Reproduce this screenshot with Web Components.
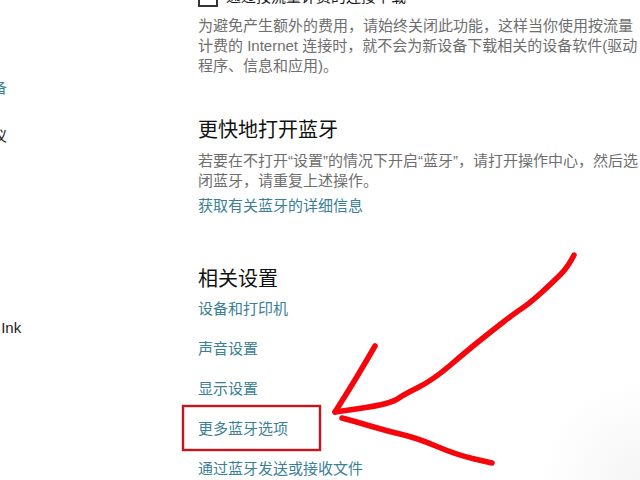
<!DOCTYPE html>
<html lang="zh-CN">
<head>
<meta charset="utf-8">
<title>蓝牙设置</title>
<style>
    html, body {
        margin: 0;
        padding: 0;
        width: 640px;
        height: 480px;
        overflow: hidden;
        background: #fff;
        font-family: "Liberation Sans", "Noto Sans CJK SC", sans-serif;
    }
</style>
</head>
<body>
<settings-page>
    <nav-list slot="nav">
        <nav-item class="link" style="margin-top:78px">蓝牙和其他设备</nav-item>
        <nav-item style="margin-top:28px">打印机和扫描仪</nav-item>
        <nav-item style="margin-top:172px">笔和 Windows Ink</nav-item>
    </nav-list>
    <settings-check slot="main">通过按流量计费的连接下载</settings-check>
    <settings-text slot="main" style="margin-top:9px">为避免产生额外的费用，请始终关闭此功能，这样当你使用按流量计费的 Internet 连接时，就不会为新设备下载相关的设备软件(驱动程序、信息和应用)。</settings-text>
    <settings-heading slot="main" style="margin-top:40px">更快地打开蓝牙</settings-heading>
    <settings-text slot="main" style="margin-top:7px">若要在不打开“设置”的情况下开启“蓝牙”，请打开操作中心，然后选<br>闭蓝牙，请重复上述操作。</settings-text>
    <settings-link slot="main" style="margin-top:5px">获取有关蓝牙的详细信息</settings-link>
    <settings-heading slot="main" style="margin-top:49px">相关设置</settings-heading>
    <settings-link slot="main" style="margin-top:6px">设备和打印机</settings-link>
    <settings-link slot="main" style="margin-top:20px">声音设置</settings-link>
    <settings-link slot="main" style="margin-top:20px">显示设置</settings-link>
    <settings-link slot="main" style="margin-top:20px">更多蓝牙选项</settings-link>
    <settings-link slot="main" style="margin-top:20px">通过蓝牙发送或接收文件</settings-link>
</settings-page>
<red-marks></red-marks>

<script>
    class SettingsPage extends HTMLElement {
        constructor() {
            super();
            this.attachShadow({ mode: "open" }).innerHTML = `
                <style>
                    :host {
                        display: flex;
                        width: 640px;
                        height: 480px;
                        overflow: hidden;
                        background: radial-gradient(circle at 640px 480px, #f5f5f5, #fff 100px);
                    }
                    .nav { flex: 0 0 198px; overflow: hidden; }
                    .main {
                        flex: 1;
                        min-width: 0;
                        margin-top: -13px;
                        display: flex;
                        flex-direction: column;
                    }
                </style>
                <div class="nav"><slot name="nav"></slot></div>
                <div class="main"><slot name="main"></slot></div>
            `;
        }
    }

    class NavList extends HTMLElement {
        constructor() {
            super();
            this.attachShadow({ mode: "open" }).innerHTML = `
                <style>
                    :host { display: flex; flex-direction: column; }
                </style>
                <slot></slot>
            `;
        }
    }

    // left menu is scrolled sideways, only the ends of the labels show
    class NavItem extends HTMLElement {
        constructor() {
            super();
            this.attachShadow({ mode: "open" }).innerHTML = `
                <style>
                    :host {
                        display: block;
                        margin-left: -98px;
                        font-size: 15px;
                        line-height: 20px;
                        white-space: nowrap;
                        color: #1a1a1a;
                    }
                    :host(.link) { color: #3a8097; }
                </style>
                <slot></slot>
            `;
        }
    }

    class SettingsCheck extends HTMLElement {
        constructor() {
            super();
            this.attachShadow({ mode: "open" }).innerHTML = `
                <style>
                    :host {
                        display: flex;
                        align-items: center;
                        gap: 8px;
                        height: 20px;
                        font-size: 15px;
                        line-height: 20px;
                        color: #1a1a1a;
                        white-space: nowrap;
                    }
                    .box {
                        box-sizing: border-box;
                        width: 20px;
                        height: 20px;
                        border: 2px solid #333;
                    }
                </style>
                <div class="box"></div>
                <span><slot></slot></span>
            `;
        }
    }

    class SettingsText extends HTMLElement {
        constructor() {
            super();
            this.attachShadow({ mode: "open" }).innerHTML = `
                <style>
                    :host {
                        display: block;
                        width: 442px;
                        font-size: 15px;
                        line-height: 20px;
                        color: #6e6e6e;
                    }
                </style>
                <slot></slot>
            `;
        }
    }

    class SettingsHeading extends HTMLElement {
        constructor() {
            super();
            this.attachShadow({ mode: "open" }).innerHTML = `
                <style>
                    :host {
                        display: block;
                        font-size: 20px;
                        line-height: 28px;
                        color: #111;
                        white-space: nowrap;
                    }
                </style>
                <slot></slot>
            `;
        }
    }

    class SettingsLink extends HTMLElement {
        constructor() {
            super();
            this.attachShadow({ mode: "open" }).innerHTML = `
                <style>
                    :host {
                        display: block;
                        font-size: 15px;
                        line-height: 20px;
                        color: #3a8097;
                        white-space: nowrap;
                    }
                </style>
                <slot></slot>
            `;
        }
    }

    // rounds the corners of a drawn stroke
    function smooth(pts) {
        let d = `M${pts[0]}`;
        for (let i = 1; i < pts.length - 1; i++) {
            const mx = (pts[i][0] + pts[i + 1][0]) / 2;
            const my = (pts[i][1] + pts[i + 1][1]) / 2;
            d += `Q${pts[i]} ${mx},${my}`;
        }
        return d + `L${pts[pts.length - 1]}`;
    }

    const strokes = [
        [[574, 255], [568, 267], [553, 282], [530, 303], [515, 313], [493, 330], [468, 350], [433, 380], [403, 395], [395, 401], [377, 406], [335, 412]],
        [[375, 346], [357, 377], [335, 412]],
        [[342, 418], [357, 422], [387, 431], [417, 438], [457, 455], [492, 463]],
    ];

    // hand drawn marks on top of the screenshot
    class RedMarks extends HTMLElement {
        constructor() {
            super();
            this.attachShadow({ mode: "open" }).innerHTML = `
                <style>
                    :host {
                        position: absolute;
                        left: 0;
                        top: 0;
                        width: 640px;
                        height: 480px;
                        pointer-events: none;
                    }
                    svg { display: block; }
                </style>
                <svg width="640" height="480" viewBox="0 0 640 480" fill="none">
                    <rect x="183" y="406" width="137" height="44" stroke="#c8141c" stroke-width="2.4"/>
                    <g stroke="#f4060c" stroke-width="5.5" stroke-linecap="round" stroke-linejoin="round">
                        ${strokes.map(s => `<path d="${smooth(s)}"/>`).join("")}
                    </g>
                </svg>
            `;
        }
    }

    customElements.define("settings-page", SettingsPage);
    customElements.define("nav-list", NavList);
    customElements.define("nav-item", NavItem);
    customElements.define("settings-check", SettingsCheck);
    customElements.define("settings-text", SettingsText);
    customElements.define("settings-heading", SettingsHeading);
    customElements.define("settings-link", SettingsLink);
    customElements.define("red-marks", RedMarks);
</script>
</body>
</html>
